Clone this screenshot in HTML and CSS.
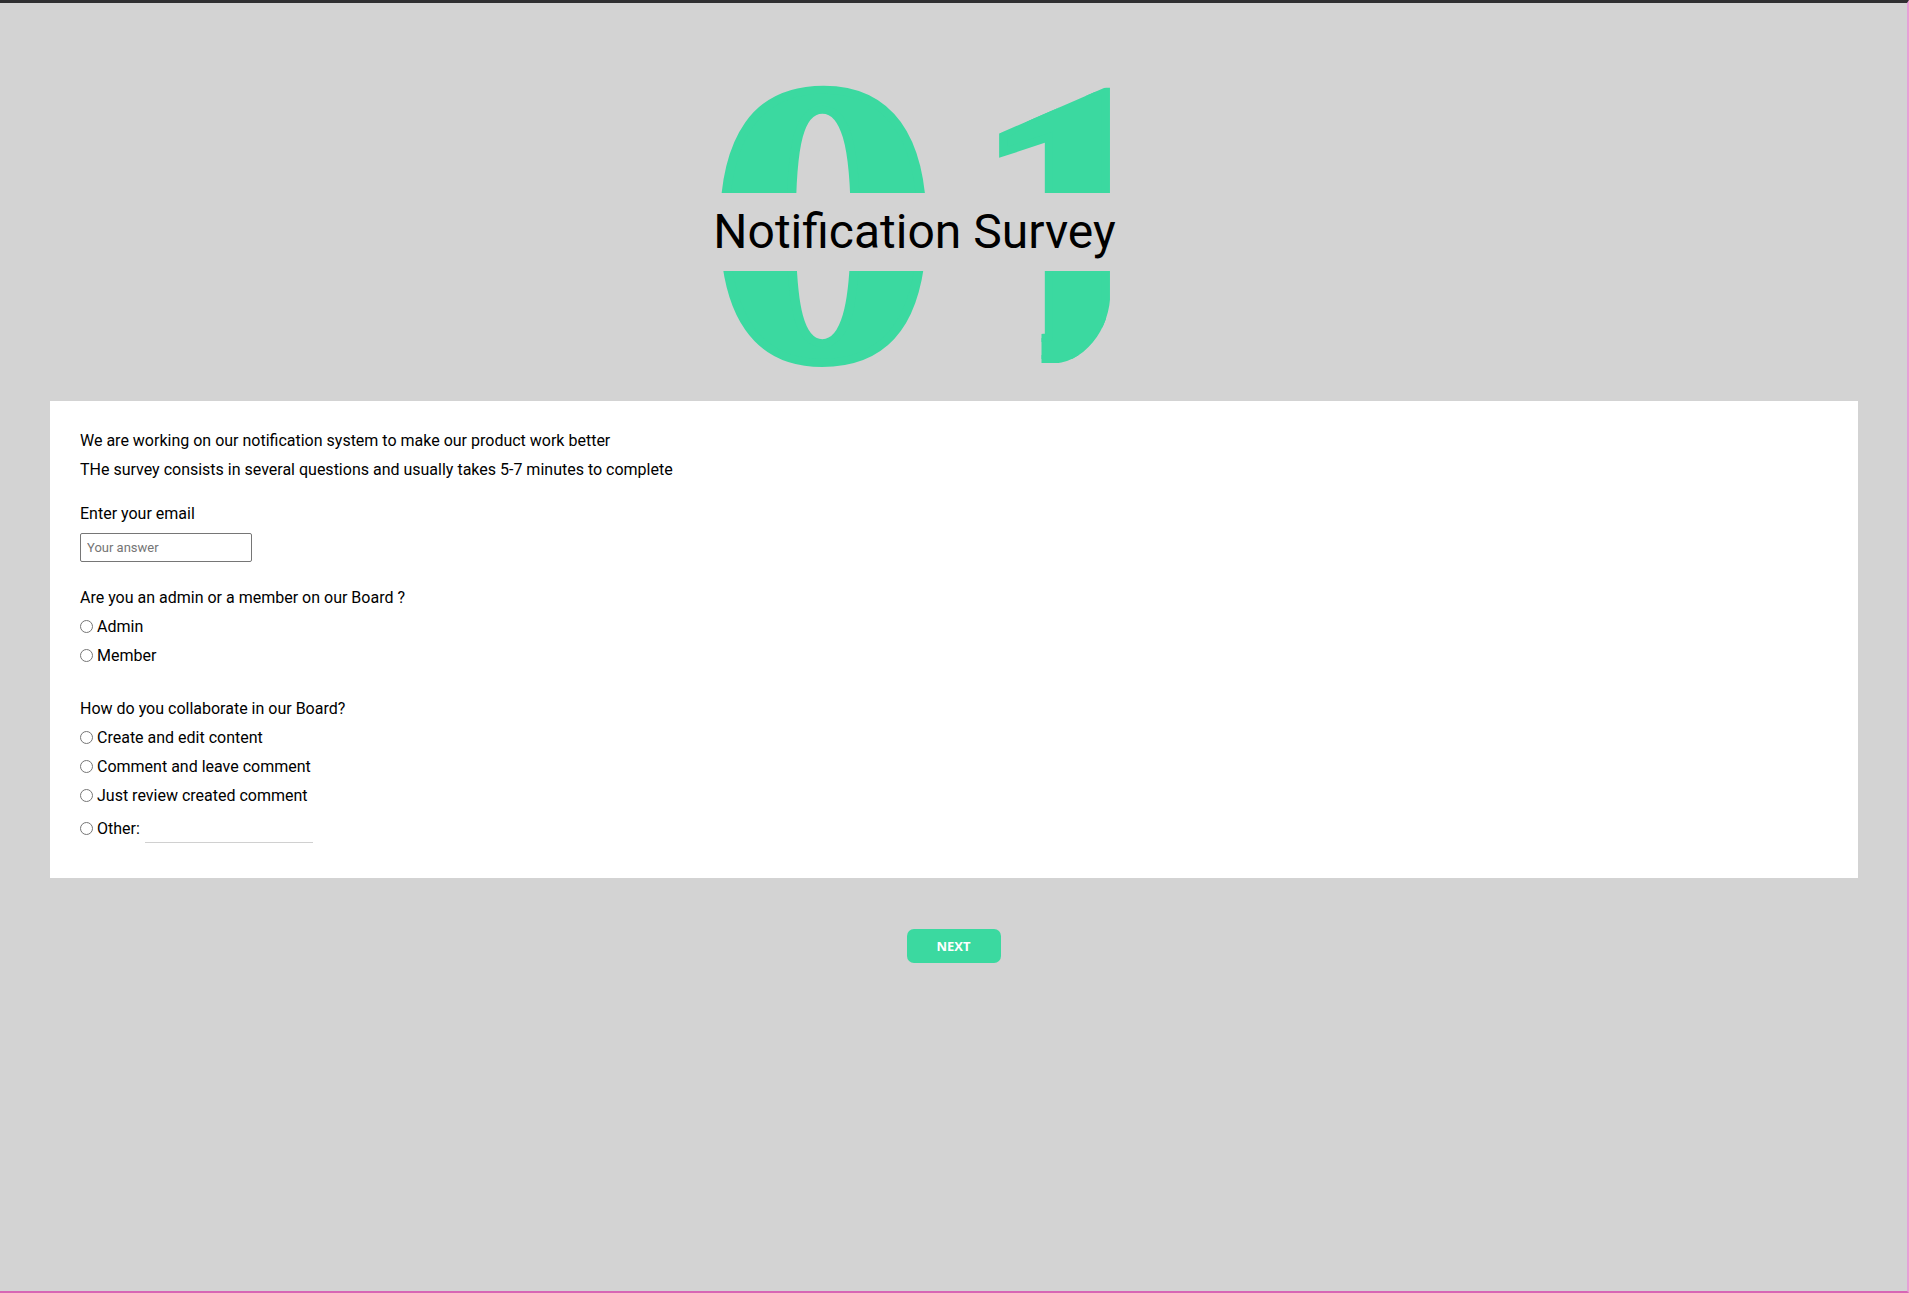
FILE: index.html
```html
<!DOCTYPE html>
<html lang="en">
<head>
<meta charset="utf-8">
<title>Notification Survey</title>
<link rel="stylesheet" href="styles.css">
</head>
<body>
<div class="frame">
  <header class="hero">
    <div class="hero-stack">
      <div class="digits"><span class="d0">0</span><span class="d1">1</span></div>
      <h1 class="title">Notification Survey</h1>
    </div>
  </header>

  <main class="card">
    <p class="line">We are working on our notification system to make our product work better</p>
    <p class="line">THe survey consists in several questions and usually takes 5-7 minutes to complete</p>

    <p class="line q-email">Enter your email</p>
    <input class="answer" type="text" placeholder="Your answer">

    <p class="line q-role">Are you an admin or a member on our Board ?</p>
    <label class="option"><input type="radio" name="role"> Admin</label>
    <label class="option"><input type="radio" name="role"> Member</label>

    <p class="line q-collab">How do you collaborate in our Board?</p>
    <label class="option"><input type="radio" name="collab"> Create and edit content</label>
    <label class="option"><input type="radio" name="collab"> Comment and leave comment</label>
    <label class="option"><input type="radio" name="collab"> Just review created comment</label>
    <label class="option other"><input type="radio" name="collab"> Other: <input class="other-input" type="text"></label>
  </main>

  <div class="actions">
    <button class="next" type="button">NEXT</button>
  </div>
</div>
</body>
</html>
```

FILE: styles.css
```css
html, body {
  margin: 0;
  padding: 0;
}

body {
  background: #d3d3d3;
  font-family: Roboto, "Liberation Sans", Arial, sans-serif;
  color: #000;
}

.frame {
  box-sizing: border-box;
  min-height: 1293px;
  border-top: 3px solid #2f2f31;
  border-right: 2px solid #e89ed6;
  border-bottom: 2px solid #d866b4;
}

.hero {
  height: 398px;
  display: flex;
  justify-content: center;
  padding-right: 78px;
  overflow: hidden;
}

.hero-stack {
  display: grid;
  justify-items: center;
}

.digits {
  grid-area: 1 / 1;
  display: flex;
  margin-top: 17px;
  padding-left: 66px;
  font-family: "Liberation Serif", "Times New Roman", serif;
  font-weight: 700;
  font-size: 405px;
  line-height: 1;
  color: #3bd9a0;
  -webkit-text-stroke: 8px #3bd9a0;
}

.d0 {
  display: inline-block;
  margin-right: 46px;
  transform: scaleX(1.15);
}

.d1 {
  display: inline-block;
  clip-path: path("M0 126 L145 63 L215 63 L215 262 L140 262 L140 271 A61 73 0 0 1 79 344 L71 344 L71 262 L0 262 Z");
}

.title {
  grid-area: 1 / 1;
  align-self: start;
  margin: 190px 0 0;
  padding: 0 2px;
  background: #d3d3d3;
  font-family: Roboto, "Liberation Sans", sans-serif;
  font-weight: 400;
  font-size: 48px;
  line-height: 78px;
  color: #000;
  position: relative;
}

.card {
  background: #fff;
  margin: 0 49px 0 50px;
  padding: 25px 30px 35px 30px;
  display: flex;
  flex-direction: column;
  align-items: flex-start;
  font-size: 16px;
}

.line {
  margin: 0;
  line-height: 29px;
}

.q-email { margin-top: 15px; }
.q-role { margin-top: 21px; }
.q-collab { margin-top: 24px; }

.answer {
  box-sizing: border-box;
  margin-top: 5px;
  width: 172px;
  height: 29px;
  border: 1px solid #767676;
  border-radius: 2px;
  padding: 0 6px;
  font-family: Roboto, "Liberation Sans", sans-serif;
  font-size: 13px;
  color: #000;
  background: #fff;
}

.answer::placeholder {
  color: #757575;
}

.option {
  display: flex;
  align-items: center;
  height: 29px;
  line-height: 29px;
}

.option input[type="radio"] {
  width: 13px;
  height: 13px;
  margin: 0 4px 0 0;
}

.other {
  margin-top: 3px;
  height: 30px;
}

.other-input {
  box-sizing: border-box;
  width: 168px;
  height: 30px;
  margin-left: 5px;
  border: none;
  border-bottom: 1px solid #d0d0d0;
  outline: none;
  background: transparent;
  font-family: Roboto, "Liberation Sans", sans-serif;
  font-size: 16px;
}

.actions {
  display: flex;
  justify-content: center;
  padding-top: 51px;
}

.next {
  width: 94px;
  height: 34px;
  border: none;
  border-radius: 7px;
  background: #3bd9a0;
  color: #fff;
  font-family: "Open Sans", Roboto, sans-serif;
  font-weight: 700;
  font-size: 13px;
  cursor: pointer;
}
```
